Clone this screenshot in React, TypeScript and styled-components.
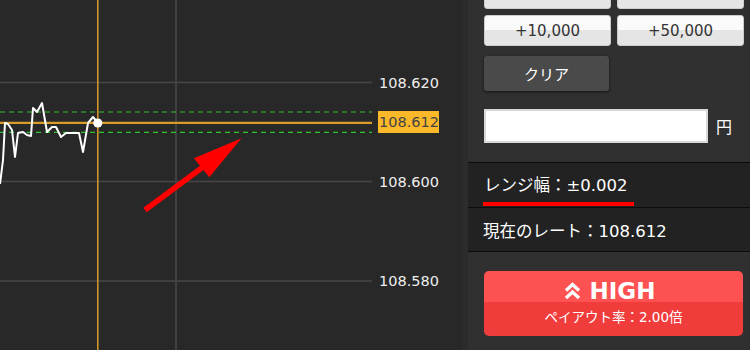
import React from "react";
import styled, { createGlobalStyle } from "styled-components";

const FONT = `"DejaVu Sans", "Noto Sans CJK JP", sans-serif`;

const Global = createGlobalStyle`
  html, body { margin: 0; padding: 0; background: #282828; overflow: hidden; }
  * { box-sizing: border-box; }
`;

const Screen = styled.div`
  display: flex;
  width: 750px;
  height: 350px;
  font-family: ${FONT};
  color: #fff;
`;

const ChartArea = styled.div`
  flex: 0 0 468px;
  height: 350px;
  background: #282828;
  border-right: 5px solid #2c2c2c;
`;

const Panel = styled.div`
  flex: 1;
  display: flex;
  flex-direction: column;
  background: #303030;
`;

const TopArea = styled.div`
  height: 163px;
  overflow: hidden;
  padding: 0 6px 0 16px;
  display: flex;
  flex-direction: column;
  border-bottom: 1px solid #0c0c0c;
`;

const AmountGrid = styled.div`
  margin-top: -22px;
  display: grid;
  grid-template-columns: 127px 127px;
  grid-auto-rows: 31px;
  gap: 6px;
`;

const AmountButton = styled.div`
  display: flex;
  align-items: center;
  justify-content: center;
  border-radius: 3px;
  border: 1px solid #cdcdcd;
  background: linear-gradient(to bottom, #fafafa 0, #fafafa 14px, #e5e5e5 14px, #e5e5e5 100%);
  color: #333;
  font-size: 15px;
`;

const ClearButton = styled.div`
  margin-top: 10px;
  width: 125px;
  height: 35px;
  display: flex;
  align-items: center;
  justify-content: center;
  border-radius: 3px;
  background: #4a4a4a;
  box-shadow: 0 1px 3px rgba(0, 0, 0, 0.6);
  color: #fff;
  font-size: 15px;
`;

const InputRow = styled.div`
  margin-top: 18px;
  display: flex;
  align-items: center;
  gap: 8px;
`;

const AmountInput = styled.div`
  width: 224px;
  height: 34px;
  background: #fff;
  border: 2px solid #d8d8d8;
`;

const Yen = styled.span`
  font-size: 16px;
  color: #fff;
`;

const InfoRow = styled.div<{ $align: "end" | "center"; $h: number }>`
  height: ${(p) => p.$h}px;
  background: #222;
  border-bottom: 1px solid #0c0c0c;
  display: flex;
  align-items: ${(p) => (p.$align === "end" ? "flex-end" : "center")};
  padding: 0 0 ${(p) => (p.$align === "end" ? 1 : 0)}px 15px;
  font-size: 16.5px;
`;

const Underlined = styled.span`
  display: inline-block;
  line-height: 24px;
  padding: 0 6px 4px 1px;
  border-bottom: 4px solid #ff0000;
`;

const BottomArea = styled.div`
  flex: 1;
  padding: 19px 7px 0 16px;
`;

const HighButton = styled.div`
  height: 65px;
  border-radius: 5px;
  background: linear-gradient(to bottom, #fe5252 0, #fe5252 31px, #f13c3c 31px, #f13c3c 100%);
  display: flex;
  flex-direction: column;
  align-items: center;
  color: #fff;
`;

const HighTitle = styled.div`
  height: 36px;
  display: flex;
  align-items: center;
  gap: 9px;
  padding-top: 3px;
  margin-right: 8px;
  font-weight: bold;
  font-size: 23px;
`;

const Payout = styled.div`
  font-size: 13.5px;
  line-height: 20px;
`;

const labelFont = { fontFamily: FONT, fontSize: 14.5 } as const;

const pricePath =
  "0,184 3,160 5,123 8,124 12,130 15,157 18,133 23,132 27,135 31,136 33,108 37,112 42,103 47,132 52,127 56,127 61,137 66,133 79,133 83,152 88,123 93,117 98,123";

function Chart() {
  return (
    <svg width="463" height="350" viewBox="0 0 463 350">
      {[82.5, 181.5, 281].map((y) => (
        <line key={y} x1="0" x2="372" y1={y} y2={y} stroke="#474747" strokeWidth="1.6" />
      ))}
      <line x1="176" x2="176" y1="0" y2="350" stroke="#474747" strokeWidth="1.6" />
      <line x1="0" x2="372" y1="112" y2="112" stroke="#2fc42f" strokeWidth="1.2" strokeDasharray="5 4" />
      <line x1="0" x2="372" y1="132.3" y2="132.3" stroke="#2fc42f" strokeWidth="1.2" strokeDasharray="5 4" />
      <line x1="97.8" x2="97.8" y1="0" y2="350" stroke="#d99c2b" strokeWidth="1.5" />
      <line x1="0" x2="372" y1="122.8" y2="122.8" stroke="#d99c2b" strokeWidth="2.2" />
      <polyline points={pricePath} fill="none" stroke="#fff" strokeWidth="2" strokeLinejoin="round" />
      <circle cx="97.8" cy="123" r="4.6" fill="#fff" />
      <line x1="145" y1="210" x2="207" y2="164" stroke="#ff0000" strokeWidth="5.5" />
      <polygon points="241.5,138.3 194,158.3 209.3,177.3" fill="#ff0000" />
      <text x="379" y="87.5" fill="#eee" style={labelFont}>108.620</text>
      <rect x="378" y="111" width="61" height="22" fill="#fbb829" />
      <text x="379" y="126.5" fill="#444" style={labelFont}>108.612</text>
      <text x="379" y="186.5" fill="#eee" style={labelFont}>108.600</text>
      <text x="379" y="286" fill="#eee" style={labelFont}>108.580</text>
    </svg>
  );
}

function DoubleUp() {
  return (
    <svg width="17" height="19" viewBox="0 0 17 19">
      <polyline points="2,9.5 8.5,3.5 15,9.5" fill="none" stroke="#fff" strokeWidth="3.4" />
      <polyline points="2,17 8.5,11 15,17" fill="none" stroke="#fff" strokeWidth="3.4" />
    </svg>
  );
}

const amounts = ["", "", "+10,000", "+50,000"];

export default function App() {
  return (
    <>
      <Global />
      <Screen>
        <ChartArea>
          <Chart />
        </ChartArea>
        <Panel>
          <TopArea>
            <AmountGrid>
              {amounts.map((a, i) => (
                <AmountButton key={i}>{a}</AmountButton>
              ))}
            </AmountGrid>
            <ClearButton>クリア</ClearButton>
            <InputRow>
              <AmountInput />
              <Yen>円</Yen>
            </InputRow>
          </TopArea>
          <InfoRow $align="end" $h={45}>
            <Underlined>レンジ幅：±0.002</Underlined>
          </InfoRow>
          <InfoRow $align="center" $h={44}>
            現在のレート：108.612
          </InfoRow>
          <BottomArea>
            <HighButton>
              <HighTitle>
                <DoubleUp />
                HIGH
              </HighTitle>
              <Payout>ペイアウト率：2.00倍</Payout>
            </HighButton>
          </BottomArea>
        </Panel>
      </Screen>
    </>
  );
}
